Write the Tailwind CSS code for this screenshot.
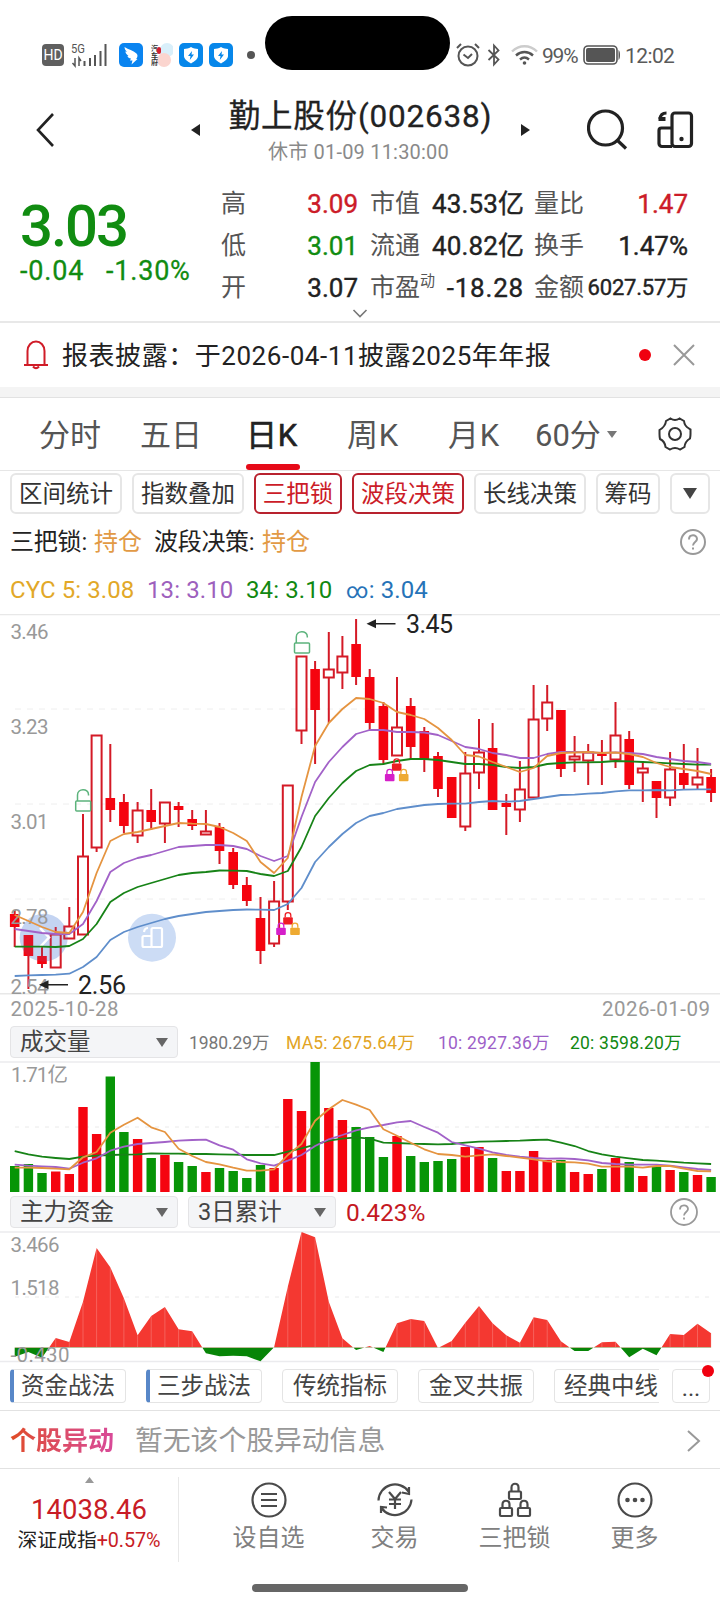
<!DOCTYPE html>
<html lang="zh-CN">
<head>
    <meta charset="UTF-8">
    <meta name="viewport" content="width=device-width, initial-scale=1.0">
    <title>勤上股份(002638)</title>
    <script src="https://cdn.jsdelivr.net/npm/@tailwindcss/browser@4"></script>
</head>
<body class="w-[720px] h-[1612px] overflow-hidden bg-white font-['Roboto','Noto_Sans_CJK_SC',sans-serif] text-[#222] leading-none whitespace-nowrap">

    <!-- Status bar -->
    <div class="relative h-[80px] pt-[30px]">
        <div class="flex items-center h-[50px] pl-[42px]">
            <div class="w-[22px] h-[22px] rounded-[4px] bg-[#5f5f5f] text-white text-[14px] text-center leading-[22px]">HD</div>
            <svg class="ml-[7px] overflow-visible" width="36" height="24" viewBox="0 0 36 24">
                <text x="0" y="9.500" font-size="12" textLength="14" lengthAdjust="spacingAndGlyphs" fill="#555">5G</text>
                <g stroke="#555" stroke-width="2">
                    <path d="M13.500 23v-5M19 23v-8M24 23v-11M29.500 23v-15M34.500 23V1"/>
                    <path d="M4 15v8l-2.500-3M8 23v-8l2 3" fill="none" stroke-width="1.500"/>
                </g>
            </svg>
            <svg class="ml-[12px]" width="24" height="24" viewBox="0 0 24 24">
                <rect width="24" height="24" rx="5" fill="#0a84f0"/>
                <path d="M5.500 4c4 2.500 8.500 3.500 12 6.500 1.500 1.500 1.300 3.500-.3 5.500h1.300l-6 5.500 1-4h-2.500l1-2c-2-.3-3-1-3.700-2.300l1.200-.3C7.500 11.500 6.500 10 6.300 8.500L8 8.800C6.500 7.500 5.700 6 5.500 4z" fill="#fff"/>
            </svg>
            <svg class="ml-[8px]" width="22" height="24" viewBox="0 0 22 24">
                <circle cx="16" cy="7" r="7" fill="#d9effa"/>
                <circle cx="13" cy="17" r="7" fill="#fbd5cf"/>
                <text x="0" y="8" font-size="7" font-weight="bold" fill="#333">汽</text>
                <text x="0" y="15" font-size="7" font-weight="bold" fill="#333">车</text>
                <text x="0" y="22" font-size="7" font-weight="bold" fill="#333">府</text>
                <rect x="6" y="4" width="4" height="7" rx="2" fill="#d02030"/>
            </svg>
            <svg class="ml-[6px]" width="24" height="24" viewBox="0 0 24 24">
                <rect width="24" height="24" rx="5" fill="#0787ea"/>
                <path d="M12 4c2.500 1.500 4.500 1.800 7 2v7c0 3-3 5-7 7.500C8 18 5 16 5 13V6c2.500-.2 4.500-.5 7-2z" fill="#fff"/>
                <path d="M13 8l-4 5h2.500l-.7 4 4.200-5.500h-2.500z" fill="#0787ea"/>
            </svg>
            <svg class="ml-[6px]" width="24" height="24" viewBox="0 0 24 24">
                <rect width="24" height="24" rx="5" fill="#0787ea"/>
                <path d="M12 4c2.500 1.500 4.500 1.800 7 2v7c0 3-3 5-7 7.500C8 18 5 16 5 13V6c2.500-.2 4.500-.5 7-2z" fill="#fff"/>
                <path d="M13 8l-4 5h2.500l-.7 4 4.200-5.500h-2.500z" fill="#0787ea"/>
            </svg>
            <div class="ml-[14px] w-[8px] h-[8px] rounded-full bg-[#555]"></div>
            <svg class="ml-[201px]" width="24" height="24" viewBox="0 0 24 24" fill="none" stroke="#555" stroke-width="2">
                <circle cx="12" cy="13" r="9.500"/>
                <path d="M7.500 11.500L12 15l4-4M1 5l4-4M23 5l-4-4"/>
            </svg>
            <svg class="ml-[7px]" width="14" height="24" viewBox="0 0 14 24" fill="none" stroke="#555" stroke-width="1.800">
                <path d="M1.500 7l10 9.500L7 21.500v-19l4.500 5L1.500 17"/>
            </svg>
            <svg class="ml-[10px]" width="27" height="22" viewBox="0 0 27 22" fill="none" stroke="#555" stroke-width="2.400">
                <path d="M1 7.500C8 .5 19 .5 26 7.500" stroke="#ccc"/>
                <path d="M5 11.500c5-4.600 12-4.600 17 0M9 15.500c3-2.600 6-2.600 9 0"/>
                <circle cx="13.500" cy="19" r="1.800" fill="#555" stroke="none"/>
            </svg>
            <div class="ml-[4px] mt-[2px] w-[38px] text-[21px] tracking-[-1.2px] text-[#5a5a5a]">99%</div>
            <svg class="ml-[3px]" width="38" height="20" viewBox="0 0 38 20">
                <rect x="1" y="1" width="33" height="18" rx="4" fill="none" stroke="#555" stroke-width="1.600"/>
                <rect x="3" y="3" width="29" height="14" rx="2" fill="#555"/>
                <path d="M35.500 5v10c2-1 2-9 0-10z" fill="#555"/>
            </svg>
            <div class="ml-[4px] mt-[2px] text-[21px] tracking-[-0.6px] text-[#5a5a5a]">12:02</div>
        </div>
        <div class="absolute left-[265px] top-[16px] w-[185px] h-[54px] rounded-full bg-black"></div>
    </div>

    <!-- Title -->
    <header class="flex h-[100px] pl-[35px]">
        <svg class="mt-[33px]" width="20" height="34" viewBox="0 0 20 34" fill="none" stroke="#222" stroke-width="2.600">
            <path d="M18 1L3 17l15 16"/>
        </svg>
        <svg class="mt-[44px] ml-[136px]" width="9" height="12" viewBox="0 0 9 12"><path d="M9 0v12L0 6z" fill="#222"/></svg>
        <div class="ml-[28px] w-[265px] text-center">
            <h1 class="mt-[20px] h-[33px] text-[31.500px] leading-[33px] tracking-[0.8px] [-webkit-text-stroke:0.3px_#222]">勤上股份(002638)</h1>
            <p class="mt-[8px] pr-[4px] text-[20px] leading-[22px] tracking-[0.2px] text-[#8a8a8a]">休市 01-09 11:30:00</p>
        </div>
        <svg class="mt-[44px] ml-[28px]" width="9" height="12" viewBox="0 0 9 12"><path d="M0 0v12l9-6z" fill="#222"/></svg>
        <svg class="mt-[29px] ml-[57px]" width="42" height="42" viewBox="0 0 42 42" fill="none" stroke="#222" stroke-width="3.200">
            <circle cx="18.500" cy="19" r="17"/>
            <path d="M29.500 30.500l9.500 9"/>
        </svg>
        <svg class="mt-[31px] ml-[28px]" width="37" height="38" viewBox="0 0 37 38" fill="none" stroke="#222" stroke-width="3.200">
            <rect x="15" y="2" width="19.500" height="33.500" rx="3"/>
            <path d="M15 17H4.500a2.500 2.500 0 0 0-2.500 2.500v13a3 3 0 0 0 3 3h10"/>
            <path d="M9.500 2Q3.500 2 3 8" stroke-width="3"/>
            <path d="M1.500 6h7v4h-7z" fill="#222" stroke="none"/>
            <circle cx="24.500" cy="28" r="2.200" fill="#222" stroke="none"/>
        </svg>
    </header>

    <!-- Quote -->
    <section class="flex h-[143px] border-b-2 border-[#e8e8e8] pl-[20px]">
        <div class="w-[201px] pt-[18px] text-[#118c11]">
            <div class="text-[58px] leading-[56px] font-medium tracking-[-2px]">3.03</div>
            <div class="mt-[2px] flex text-[27px] leading-[30px] tracking-[0.8px] [-webkit-text-stroke:0.3px_#118c11]">
                <span class="w-[86px]">-0.04</span><span>-1.30%</span>
            </div>
        </div>
        <div class="pt-[3px]">
            <div class="grid grid-cols-[149px_164px_154px] leading-[42px] text-[25px] text-[#555]">
                <div class="flex justify-between pr-[12px]"><span>高</span><span class="text-[26px] [-webkit-text-stroke:0.4px] text-[#cc1c28]">3.09</span></div>
                <div class="flex justify-between pr-[10px]"><span>市值</span><span class="text-[26px] tracking-[0.1px] [-webkit-text-stroke:0.4px] text-[#222]">43.53亿</span></div>
                <div class="flex justify-between"><span>量比</span><span class="text-[26px] [-webkit-text-stroke:0.4px] text-[#cc1c28]">1.47</span></div>
                <div class="flex justify-between pr-[12px]"><span>低</span><span class="text-[26px] [-webkit-text-stroke:0.4px] text-[#118c11]">3.01</span></div>
                <div class="flex justify-between pr-[10px]"><span>流通</span><span class="text-[26px] tracking-[0.1px] [-webkit-text-stroke:0.4px] text-[#222]">40.82亿</span></div>
                <div class="flex justify-between"><span>换手</span><span class="text-[26px] [-webkit-text-stroke:0.4px] text-[#222]">1.47%</span></div>
                <div class="flex justify-between pr-[12px]"><span>开</span><span class="text-[26px] [-webkit-text-stroke:0.4px] text-[#222]">3.07</span></div>
                <div class="flex justify-between pr-[10px]"><span class="flex">市盈<i class="not-italic text-[15px] leading-[28px]">动</i></span><span class="text-[26px] tracking-[0.8px] [-webkit-text-stroke:0.4px] text-[#222]">-18.28</span></div>
                <div class="flex justify-between"><span>金额</span><span class="text-[22px] tracking-[-0.2px] [-webkit-text-stroke:0.4px] text-[#222]">6027.57万</span></div>
            </div>
            <svg class="ml-[131px]" width="16" height="9" viewBox="0 0 16 9" fill="none" stroke="#777" stroke-width="1.600"><path d="M1.500 1L8 7.500 14.500 1"/></svg>
        </div>
    </section>

    <!-- Notice -->
    <section class="flex items-center h-[64px] pl-[24px]">
        <svg width="24" height="30" viewBox="0 0 24 30" fill="none" stroke="#d01c28" stroke-width="2">
            <path d="M3.500 25V11a8.500 9.500 0 0 1 17 0v14M0 25h24M9 26.500q3 3.500 6 0"/>
        </svg>
        <p class="ml-[14px] mt-[2px] w-[577px] text-[26px] tracking-[0.55px]">报表披露：于2026-04-11披露2025年年报</p>
        <div class="w-[12px] h-[12px] rounded-full bg-[#f0000f]"></div>
        <svg class="ml-[22px]" width="22" height="22" viewBox="0 0 22 22" fill="none" stroke="#999" stroke-width="2"><path d="M1 1l20 20M21 1L1 21"/></svg>
    </section>
    <div class="h-[11px] bg-[#f4f4f4] border-b border-[#e2e2e2]"></div>

    <!-- Period tabs -->
    <nav class="flex h-[73px] pl-[39px] border-b border-[#e6e6e6] text-[31px] leading-[76px] text-[#555]">
        <div class="w-[101px]">分时</div>
        <div class="w-[106px]">五日</div>
        <div class="relative w-[101px] tracking-[0.8px] text-[#222] [-webkit-text-stroke:0.6px_#222]">日K
            <div class="absolute left-0 top-[66px] w-[54px] h-[6px] rounded-[3px] bg-[#e60a18]"></div>
        </div>
        <div class="w-[101px] tracking-[0.8px]">周K</div>
        <div class="w-[87px] tracking-[0.8px]">月K</div>
        <div class="w-[72px]">60分</div>
        <svg class="mt-[33px]" width="10" height="7" viewBox="0 0 10 7"><path d="M0 0h10L5 7z" fill="#777"/></svg>
        <svg class="mt-[19px] ml-[41px]" width="34" height="34" viewBox="0 0 34 34" fill="none" stroke="#333" stroke-width="2">
            <path d="M12.500 1.500Q17 4.500 21.500 1.500L26 4q.5 5 5 7.500.5.500 1.500 1v4.500q0 2.500-.500 4.500Q27 24.500 26.500 30l-4.500 2.500Q17 29.500 12 32.500L7.500 30Q7 24.500 2 22q-.5-2.500-.5-5v-4Q7.500 9.500 8 4z"/>
            <circle cx="17" cy="17" r="6"/>
        </svg>
    </nav>

    <!-- Indicator buttons -->
    <div class="flex h-[44px] pt-[2px] pl-[10px] text-[23.500px] leading-[38px] text-center text-[#333]">
        <div class="w-[112px] h-[41px] border-2 border-[#e6e6e6] rounded-[6px]">区间统计</div>
        <div class="ml-[10px] w-[112px] h-[41px] border-2 border-[#e6e6e6] rounded-[6px]">指数叠加</div>
        <div class="ml-[10px] w-[88px] h-[41px] border-2 border-[#b8222e] rounded-[6px] text-[#cc1c28]">三把锁</div>
        <div class="ml-[10px] w-[112px] h-[41px] border-2 border-[#b8222e] rounded-[6px] text-[#cc1c28]">波段决策</div>
        <div class="ml-[10px] w-[112px] h-[41px] border-2 border-[#e6e6e6] rounded-[6px]">长线决策</div>
        <div class="ml-[10px] w-[64px] h-[41px] border-2 border-[#e6e6e6] rounded-[6px]">筹码</div>
        <div class="ml-[10px] flex items-center justify-center w-[40px] h-[41px] border-2 border-[#e6e6e6] rounded-[6px]">
            <svg width="14" height="11" viewBox="0 0 14 11"><path d="M0 0h14L7 11z" fill="#444"/></svg>
        </div>
    </div>

    <div class="flex items-center h-[54px] pl-[10px] text-[24px]">
        <span class="w-[84px] tracking-[-0.2px]">三把锁:</span><span class="w-[60px] text-[#e29a45]">持仓</span>
        <span class="w-[108px] tracking-[-0.3px]">波段决策:</span><span class="w-[418px] text-[#e29a45]">持仓</span>
        <svg width="26" height="26" viewBox="0 0 26 26" fill="none" stroke="#999" stroke-width="2">
            <circle cx="13" cy="13" r="12"/>
            <path d="M9 10.500C9 5 17 5 17 10c0 3-4 3-4 6.500M13 18.500v2"/>
        </svg>
    </div>
    <div class="h-[45px] pl-[10px] flex text-[24px] leading-[43px] tracking-[0.1px]">
        <span class="w-[137px] text-[#e2a828]">CYC 5: 3.08</span>
        <span class="w-[99px] text-[#9d60bd]">13: 3.10</span>
        <span class="w-[100px] text-[#118811]">34: 3.10</span>
        <span class="text-[#2673b8]"><span class="text-[22px]">∞</span>: 3.04</span>
    </div>

    <!-- K line -->
    <svg id="kline" class="block" width="720" height="413" viewBox="0 614 720 413" font-size="20.500" fill="#999">
        <path d="M0 614.500h720M0 993.700h720" stroke="#e8e8e8" stroke-width="1.500"/>
        <path d="M15 709h696M15 804h696M15 899h696" stroke="#eee" stroke-dasharray="6 6"/>
        <circle cx="43.700" cy="937.700" r="24" fill="#d3e0f6"/>
        <g id="candles" stroke="#d41a26" stroke-width="2"></g>
        <circle cx="43.700" cy="937.700" r="24" fill="#5a82d2" fill-opacity=".12"/>
        <path d="M40 928l9 9.500-9 9.500" fill="none" stroke="#fff" stroke-width="2.500"/>
        <text x="10.500" y="638.500" textLength="38">3.46</text>
        <text x="10.500" y="734" textLength="38">3.23</text>
        <text x="10.500" y="829" textLength="38">3.01</text>
        <text x="10.500" y="924" textLength="38">2.78</text>
        <text x="10.500" y="994" textLength="38">2.54</text>
        <circle cx="152" cy="937.700" r="24" fill="#ccdcf5"/>
        <g fill="none" stroke="#fff" stroke-width="2.200">
            <rect x="151.500" y="928" width="10.500" height="19" rx="1.500"/>
            <path d="M151.500 936h-7.500q-1.500 0-1.500 1.500v8q0 1.500 1.500 1.500h7.500M148 928q-3.500 0-4 4"/>
        </g>
        <g id="klines" fill="none" stroke-width="1.800" stroke-linejoin="round"></g>
        <g fill="none" stroke="#5cb37c" stroke-width="1.500">
            <rect x="75.700" y="801" width="15" height="10" rx="1"/>
            <path d="M77.500 801v-6c0-7 11-7 11-.500v1"/>
            <rect x="294.500" y="643" width="15" height="10" rx="1"/>
            <path d="M296.300 643v-6c0-7 11-7 11-.500v1"/>
        </g>
        <g id="locks"></g>
        <g fill="#222" font-size="25">
            <path d="M39 984.700l9.500-4.500v9zM366.500 623.700l9.500-4.500v9z"/>
            <path d="M47 984.700h21M375 623.700h20.500" stroke="#222" stroke-width="1.500"/>
            <text x="78" y="993.500" textLength="48">2.56</text>
            <text x="406" y="632.500" textLength="47">3.45</text>
        </g>
        <text x="10.500" y="1015.500" textLength="108">2025-10-28</text>
        <text x="602" y="1015.500" textLength="108">2026-01-09</text>
    </svg>

    <!-- Volume -->
    <div class="flex h-[35px] pl-[10px] -mt-px text-[17.500px] leading-[34px]">
        <div class="flex items-center justify-between w-[168px] h-[32px] pl-[9px] pr-[9px] bg-[#f4f5f7] border border-[#e4e4e6] rounded-[4px] text-[23.500px] text-[#444]">成交量
            <svg width="12" height="9" viewBox="0 0 12 9"><path d="M0 0h12L6 9z" fill="#666"/></svg>
        </div>
        <span class="ml-[11px] w-[97px] tracking-[-0.1px] text-[#777]">1980.29万</span>
        <span class="w-[152px] tracking-[0.2px] text-[#e2a424]">MA5: 2675.64万</span>
        <span class="w-[132px] tracking-[0.2px] text-[#9d5fc8]">10: 2927.36万</span>
        <span class="tracking-[0.2px] text-[#118811]">20: 3598.20万</span>
    </div>
    <svg id="volume" class="block" width="720" height="131" viewBox="0 1061 720 131" font-size="20.500" fill="#999">
        <path d="M0 1062h720" stroke="#ebebee" stroke-width="1.500"/>
        <path d="M15 1127h696" stroke="#eaeaea" stroke-dasharray="4 6"/>
        <g id="bars"></g>
        <g id="vlines" fill="none" stroke-width="1.800" stroke-linejoin="round"></g>
        <text x="11" y="1082" textLength="57">1.71亿</text>
    </svg>

    <!-- Main fund -->
    <div class="flex h-[39px] pt-[4px] pl-[10px] leading-[34px] text-[23.500px] text-[#444]">
        <div class="flex items-center justify-between w-[168px] h-[32px] px-[9px] bg-[#f4f5f7] border border-[#e4e4e6] rounded-[4px]">主力资金
            <svg width="12" height="9" viewBox="0 0 12 9"><path d="M0 0h12L6 9z" fill="#666"/></svg>
        </div>
        <div class="flex items-center justify-between ml-[10px] w-[148px] h-[32px] px-[9px] bg-[#f4f5f7] border border-[#e4e4e6] rounded-[4px]">3日累计
            <svg width="12" height="9" viewBox="0 0 12 9"><path d="M0 0h12L6 9z" fill="#666"/></svg>
        </div>
        <span class="ml-[10px] w-[324px] text-[#c41822] text-[24.500px]">0.423%</span>
        <svg class="mt-[2px]" width="28" height="28" viewBox="0 0 28 28" fill="none" stroke="#999" stroke-width="1.800">
            <circle cx="14" cy="14" r="13"/>
            <path d="M10 11.500C10 6 18 6 18 11c0 3-4 3-4 6.500M14 19.500v2"/>
        </svg>
    </div>
    <svg id="fund" class="block overflow-visible" width="720" height="131" viewBox="0 1231 720 131" font-size="20.500" fill="#999">
        <defs>
            <clipPath id="above"><path d="M0 1231h720v116.500H0z"/></clipPath>
            <clipPath id="below"><path d="M0 1347.500h720v16H0z"/></clipPath>
        </defs>
        <path d="M0 1232h720M0 1361.500h720" stroke="#ebebee" stroke-width="1.500"/>
        <path d="M15 1297h696" stroke="#eaeaea" stroke-dasharray="4 6"/>
        <g id="areas"></g>
        <text x="10.500" y="1252" textLength="49">3.466</text>
        <text x="10.500" y="1295" textLength="49">1.518</text>
        <text x="10.500" y="1361.500" textLength="59">-0.430</text>
    </svg>

    <!-- Strategy buttons -->
    <div class="relative flex h-[49px] pt-[7px] pl-[10px] border-b border-[#e2e2e2] text-[23.500px] leading-[33px] text-center text-[#444]">
        <div class="w-[116px] h-[34px] pr-[3px] border border-[#e4e4e4] border-l-4 border-l-[#5887c8] rounded-[4px]">资金战法</div>
        <div class="ml-[20px] w-[116px] h-[34px] pr-[3px] border border-[#e4e4e4] border-l-4 border-l-[#5887c8] rounded-[4px]">三步战法</div>
        <div class="ml-[20px] w-[116px] h-[34px] border border-[#e4e4e4] rounded-[4px]">传统指标</div>
        <div class="ml-[20px] w-[116px] h-[34px] border border-[#e4e4e4] rounded-[4px]">金叉共振</div>
        <div class="ml-[20px] w-[105px] h-[34px] border border-r-0 border-[#e4e4e4] rounded-l-[4px] pl-[9px] text-left">经典中线</div>
        <div class="ml-[13px] w-[38px] h-[34px] border border-[#e4e4e4] rounded-[4px] leading-[36px]">...</div>
        <div class="absolute left-[702px] top-[3px] w-[12px] h-[12px] rounded-full bg-[#f0000f]"></div>
    </div>

    <div class="flex items-center h-[58px] pt-[3px] pl-[10px] border-b border-[#e2e2e2]">
        <span class="w-[125px] text-[26px] leading-[32px] font-bold text-transparent bg-clip-text bg-linear-to-r from-[#e04a20] from-0% to-[#d848a0] to-90%">个股异动</span>
        <span class="w-[552px] text-[27.800px] text-[#999]">暂无该个股异动信息</span>
        <svg width="14" height="22" viewBox="0 0 14 22" fill="none" stroke="#999" stroke-width="2"><path d="M1 1l11 10L1 21"/></svg>
    </div>

    <!-- Bottom bar -->
    <footer class="flex h-[103px] pt-[8px] text-[24px] text-center text-[#808080]">
        <div class="flex flex-col items-center w-[179px] h-[85px] border-r border-[#e8e8e8]">
            <svg width="9" height="6" viewBox="0 0 9 6"><path d="M4.500 0L9 6H0z" fill="#999"/></svg>
            <div class="mt-[11px] text-[27.500px] leading-[32px] tracking-[0.1px] text-[#c81c26]">14038.46</div>
            <div class="mt-[0px] text-[19.800px] leading-[30px] text-[#222]">深证成指<span class="tracking-[-0.1px] text-[#c81c26]">+0.57%</span></div>
        </div>
        <div class="w-[179px] flex flex-col items-center pt-[5px]">
            <svg width="36" height="36" viewBox="0 0 36 36" fill="none" stroke="#4a4a4a" stroke-width="2.200">
                <circle cx="18" cy="18" r="16.500"/><path d="M10 12h16M10 18h16M10 24h16"/>
            </svg>
            <span class="mt-[8px]">设自选</span>
        </div>
        <div class="w-[73px] flex flex-col items-center pt-[5px]">
            <svg width="36" height="36" viewBox="0 0 36 36" fill="none" stroke="#4a4a4a" stroke-width="2.200">
                <path d="M1.500 18.500A16.500 16.500 0 0 1 31.500 9.500M34.500 17.500A16.500 16.500 0 0 1 4.500 26M32 5v7l-7-1.500M4 31v-6l6 .5"/>
                <path d="M12 10l6 7 6-7M18 17v10M12 17.500h12M12 22h12"/>
            </svg>
            <span class="mt-[8px]">交易</span>
        </div>
        <div class="w-[167px] flex flex-col items-center pt-[5px]">
            <svg width="36" height="36" viewBox="0 0 36 36" fill="none" stroke="#4a4a4a" stroke-width="2.200">
                <rect x="12" y="9.500" width="12" height="7.500" rx="1"/><path d="M14.500 9V5.500c0-5 7-5 7 0V9"/>
                <rect x="3" y="26" width="12" height="8" rx="1"/><path d="M5.500 26v-3.500c0-5 7-5 7 0V26"/>
                <rect x="21" y="26" width="12" height="8" rx="1"/><path d="M23.500 26v-3.500c0-5 7-5 7 0V26"/>
            </svg>
            <span class="mt-[8px]">三把锁</span>
        </div>
        <div class="w-[73px] flex flex-col items-center pt-[5px]">
            <svg width="36" height="36" viewBox="0 0 36 36" fill="none" stroke="#4a4a4a" stroke-width="2.200">
                <circle cx="18" cy="18" r="16.500"/>
                <g fill="#4a4a4a" stroke="none"><circle cx="10.500" cy="18" r="2.300"/><circle cx="18" cy="18" r="2.300"/><circle cx="25.500" cy="18" r="2.300"/></g>
            </svg>
            <span class="mt-[8px]">更多</span>
        </div>
    </footer>
    <div class="mt-[12px] mx-auto w-[216px] h-[8px] rounded-full bg-[#666]"></div>

    <script>
        const px = i => +(14.7 + 13.655 * i).toFixed(1);
        const line = (ys, color) => `<polyline stroke="${color}" points="${ys.map((y, i) => px(i) + ',' + y.toFixed(1)).join(' ')}"/>`;

        // [filled, body top, body bottom, wick top, wick bottom]
        const candles = [
            [1,914,927,910,947],[1,935,956,935,989],[1,956,964,947,968],[0,934,968,927,968],[0,926,939,907,939],
            [0,856,935,814,935],[0,735,848,735,852],[1,798,810,744,822],[1,802,826,794,833],[0,810,836,802,843],
            [1,810,822,789,830],[0,802,824,802,843],[1,806,810,802,827],[1,819,826,810,830],[0,831,835,810,835],
            [1,827,851,823,864],[1,852,885,848,889],[1,885,901,877,906],[1,918,951,897,964],[0,901,944,881,947],
            [0,785,902,785,910],[0,656,731,656,744],[1,669,710,661,764],[0,669,678,632,723],[0,656,673,636,689],
            [1,644,677,619,685],[1,677,723,669,730],[1,706,760,702,764],[0,727,756,677,756],[1,706,747,698,760],
            [1,731,760,727,772],[1,756,789,752,797],[1,777,818,777,818],[0,773,827,752,831],[0,752,773,719,789],
            [1,748,810,723,810],[1,803,807,794,835],[0,789,810,761,822],[0,719,798,685,798],[0,702,719,685,731],
            [1,710,769,710,777],[0,756,760,736,772],[0,752,761,744,785],[1,754,756,740,785],[0,735,760,702,768],
            [1,739,785,731,789],[0,768,773,761,802],[1,781,798,781,818],[0,769,798,752,806],[1,773,785,744,789],
            [0,777,785,748,789],[1,777,793,769,802]
        ];
        document.getElementById('candles').innerHTML = candles.map(([filled, t, b, wt, wb], i) => {
            const x = px(i);
            return `<path d="M${x} ${wt}V${t}M${x} ${b}V${wb}"/>` + (filled
                ? `<rect x="${x - 4.8}" y="${t}" width="9.6" height="${b - t}" fill="#f5040f" stroke="none"/>`
                : `<rect x="${x - 5}" y="${t + .5}" width="10" height="${b - t - 1}" fill="#fff" fill-opacity="${i < 5 ? 0 : 1}"/>`);
        }).join('');

        const cyc5 = [915,921,927,932,933,912,873,841,834,832,829,826,823,823.7,824,827,833,841,862,873,858,797,746,723,709,698,699,703,712,715,719,728,740,755,756.5,762,767,772,768,756,753,752.5,752,753,752.5,754,757,763,767,769,771,774];
        const cyc13 = [929,931,933,934,934,924,901,872,863,858,855,851,847,846,845,845,846,849,856,861,856,817,782,762,747,734,730,730,732,732,732.5,735,741,747,749,753,755,758,758,754,752,752,752.5,753,752.3,753,754,757,759,761,762,764];
        const cyc34 = [946.7,946.7,946.7,947,946,939,924,902,893,887,883,879,875,873,872,870.5,870.7,871,874,876,871,847,816,798,783,771,765,764,761,759,759,760,762,764,764,765,767,768,767,764,763,762.3,762.3,762,761,761.3,762,762.7,763.3,764,764.7,764.7];
        const cycInf = [976,975.3,975,974.7,973.7,967,957,940,932,927,923,919,916,914,912,911,910,909.5,909.7,910,904,888,862,847,834,823,816,813,809,807,805,804,803.7,803.7,802,801,801.7,801,799,797,795,794.7,793.7,793,791.3,790.3,790.3,790,790.3,789.7,789.3,789.3];
        document.getElementById('klines').innerHTML = line(cycInf, '#5f8ecb') + line(cyc34, '#178317') + line(cyc13, '#a262c8') + line(cyc5, '#e59440');

        const lock = (x, y, c) => `<rect x="${x - 4.8}" y="${y}" width="9.6" height="7.3" rx="1" fill="${c}"/><path d="M${x - 2.8} ${y}v-2c0-3.500 5.600-3.500 5.600 0v2" fill="none" stroke="${c}" stroke-width="1.300"/>`;
        document.getElementById('locks').innerHTML = [[288, 917.3], [396.7, 763.5]].map(([x, y]) =>
            lock(x, y, '#ee1c22') + lock(x - 7, y + 10.5, '#d51fc9') + lock(x + 7, y + 10.5, '#eeaa32')).join('');

        const up = '#f5040f', down = '#079507';
        const volume = [26,28,19,20.5,18,85,58,115.5,60,53,34,37,30,26,20,24,21,14,27,24,93,81,130,84,72,65,55,35,56,36,30,31,33,45,45,34,21,21,41,32,32,20,18,23,34,30,16,25,22,20,17,15];
        const volumeSide = 'gggrrrrggrgrggrgggg' + 'rrrgrrgggrggggrrgrrrrgrrgrgrgrgrg';
        document.getElementById('bars').innerHTML = volume.map((h, i) =>
            `<rect x="${px(i) - 4.7}" y="${1192 - h}" width="9.4" height="${h}" fill="${volumeSide[i] === 'r' ? up : down}"/>`).join('');

        const v3 = a => a.map(v => 1020 + v / 3);
        const ma5 = v3([443,443,444,446,448,412,396,338,314,293,322,336,386,408,426,433,443,452,452,448,405,372,302,268,240,254,270,328,347,368,388,402,405,410,406,403,408,413,418,424,426,427,431,440,440,440,443,438,438,446,453,454]);
        const ma10 = v3([434,437,439,441,446,428,415,392,380,372,369,366,362,360,359,376,389,418,430,437,422,405,378,358,345,331,322,315,307,303,321,338,366,376,386,397,405,410,414,416,415,417,421,429,432,434,434,434,437,442,447,450]);
        const ma20 = v3([393,403,410,414,417,410,407,405,404,403,400,401,401,402,402,403,404,405,405,405,395,385,374,362,356,352,356,368,369,371,372,373,372,368,365,364,363,362,360,359,368,378,393,403,410,415,420,422,425,428,430,432]);
        document.getElementById('vlines').innerHTML = line(ma20, '#178317') + line(ma10, '#a262c8') + line(ma5, '#e59440');

        const fund = [500,486,503,444,456,335,174,232,325,436,378,351,418,424,490,499,497,499,514,472,290,126,142,335,445,480,468,486,400,387,393,474,453,398,348,400,436,458,382,390,454,483,483,457,455,502,476,496,432,435,401,430].map(v => 1190 + v / 3);
        const shape = `M${px(0)} 1347.5` + fund.map((y, i) => `L${px(i)} ${y.toFixed(1)}`).join('') + `L${px(51)} 1347.5Z`;
        document.getElementById('areas').innerHTML =
            `<path d="${shape}" fill="#f43831" clip-path="url(#above)"/><path d="${shape}" fill="#078507" clip-path="url(#below)"/>` +
            fund.map((y, i) => y < 1345 ? `<path d="M${px(i)} ${y}V1347" stroke="#fff" stroke-opacity=".3" stroke-width=".7"/>` : '').join('');
    </script>
</body>
</html>
